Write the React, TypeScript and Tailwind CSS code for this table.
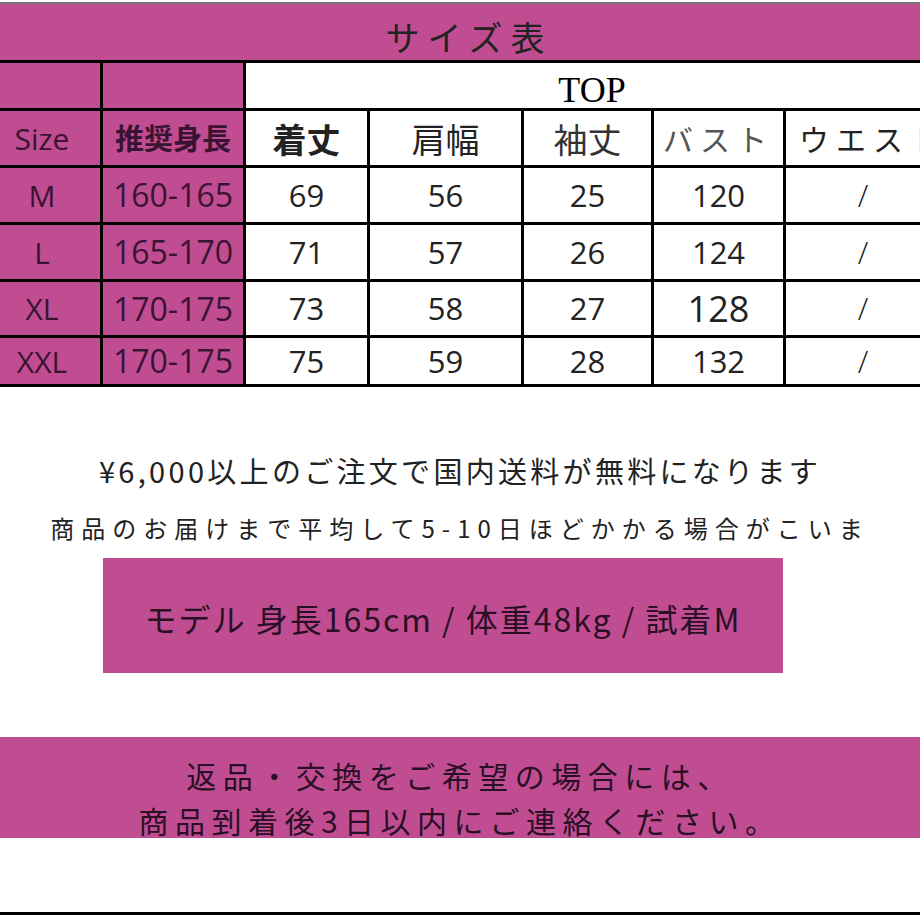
import React from "react";

const jp = "font-['Noto_Sans_CJK_JP','Noto_Sans',sans-serif]";
const num = "font-['Open_Sans','Noto_Sans_CJK_JP',sans-serif]";

type Row = { size: string; height: string; vals: string[] };

const rows: Row[] = [
  { size: "M", height: "160-165", vals: ["69", "56", "25", "120", "/"] },
  { size: "L", height: "165-170", vals: ["71", "57", "26", "124", "/"] },
  { size: "XL", height: "170-175", vals: ["73", "58", "27", "128", "/"] },
  { size: "XXL", height: "170-175", vals: ["75", "59", "28", "132", "/"] },
];

const pinkCell = "bg-[#c04d92] flex items-center justify-center text-[#3a1333]";
const whiteCell = "bg-white flex items-center justify-center text-[#222]";

const SizeTable: React.FC = () => (
  <div className="w-[952px] mt-[2px] border-t-2 border-[#777]">
    <div
      className={`h-[56px] bg-[#c04d92] flex items-center justify-center pt-2 pr-[14px] text-[34px] tracking-[8px] text-[#222] ${jp}`}
    >
      サイズ表
    </div>
    <div className="h-[3px] bg-black" />
    <div className="grid grid-cols-[100px_140px_121px_151px_127px_129px_166px] grid-rows-[45px_54px_54px_54px_53px_46px] gap-[3px] bg-black pb-[3px]">
      <div className={pinkCell} />
      <div className={pinkCell} />
      <div
        className={`${whiteCell} col-span-5 pt-2 pr-[14px] text-[36px] text-black font-['Liberation_Serif',serif]`}
      >
        TOP
      </div>

      <div className={`${pinkCell} pr-4 text-[30px] ${num}`}>Size</div>
      <div className={`${pinkCell} text-[29px] font-bold ${jp}`}>推奨身長</div>
      <div className={`${whiteCell} text-[34px] font-bold ${jp}`}>着丈</div>
      <div className={`${whiteCell} text-[34px] ${jp}`}>肩幅</div>
      <div className={`${whiteCell} text-[34px] text-[#333] ${jp}`}>袖丈</div>
      <div className={`${whiteCell} text-[30px] tracking-[7px] text-[#555] ${jp}`}>バスト</div>
      <div className={`${whiteCell} text-[30px] tracking-[7px] pl-[8px] ${jp}`}>ウエスト</div>

      {rows.map((r) => (
        <React.Fragment key={r.size}>
          <div className={`${pinkCell} pr-4 text-[30px] ${num}`}>{r.size}</div>
          <div className={`${pinkCell} text-[32px] ${num}`}>{r.height}</div>
          {r.vals.map((v, i) => (
            <div
              key={i}
              className={`${whiteCell} ${num} ${
                v === "128" ? "text-[36px]" : "text-[31px]"
              } ${i === 4 ? "pr-[12px] font-light" : ""}`}
            >
              {v}
            </div>
          ))}
        </React.Fragment>
      ))}
    </div>
  </div>
);

const App: React.FC = () => {
  return (
    <div className="w-[920px] h-[920px] bg-white overflow-hidden flex flex-col">
      <SizeTable />

      <p
        className={`mt-[65px] text-center text-[29px] leading-[36px] tracking-[3.3px] text-[#222] ${jp}`}
      >
        ¥6,000以上のご注文で国内送料が無料になります
      </p>
      <p
        className={`mt-[25px] text-center text-[24px] leading-[30px] tracking-[7px] text-[#222] ${jp}`}
      >
        商品のお届けまで平均して5-10日ほどかかる場合がこいま
      </p>

      <div
        className={`mt-[15px] ml-[103px] w-[680px] h-[115px] shrink-0 bg-[#c04d92] flex items-center justify-center pt-1 text-[32px] tracking-[2px] text-[#2a0f25] ${jp}`}
      >
        モデル 身長165cm / 体重48kg / 試着M
      </div>

      <div
        className={`mt-[64px] h-[101px] shrink-0 bg-[#c04d92] pt-[16px] text-center text-[30px] leading-[45px] tracking-[6.5px] text-[#2a0f25] ${jp}`}
      >
        <div>返品・交換をご希望の場合には、</div>
        <div>商品到着後3日以内にご連絡ください。</div>
      </div>

      <div className="mt-[74px] h-[3px] shrink-0 bg-black" />
    </div>
  );
};

export default App;
